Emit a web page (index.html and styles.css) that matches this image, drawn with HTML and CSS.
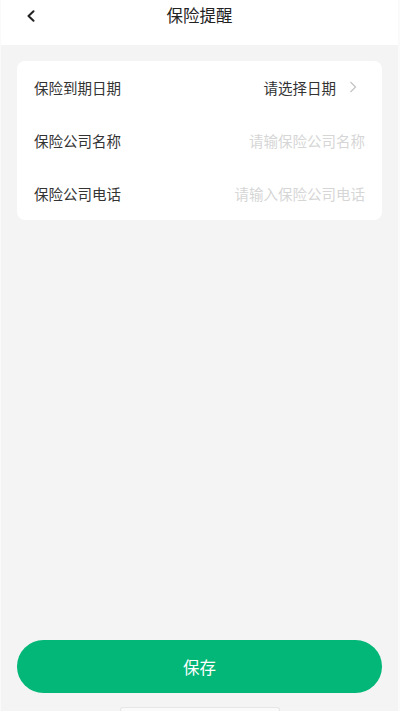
FILE: index.html
```html
<!DOCTYPE html>
<html lang="zh-CN">
<head>
<meta charset="utf-8">
<link rel="stylesheet" href="styles.css">
</head>
<body>
<div class="page">
  <header class="nav">
    <span class="back">
      <svg width="10" height="12" viewBox="0 0 10 12"><path d="M7.5 1.2 L2.5 6 L7.5 10.8" fill="none" stroke="#222" stroke-width="2" stroke-linecap="round" stroke-linejoin="round"/></svg>
    </span>
    <h1 class="title">保险提醒</h1>
  </header>
  <main class="content">
    <section class="card">
      <div class="row">
        <span class="label">保险到期日期</span>
        <span class="value">请选择日期
          <svg class="arrow" width="8" height="12" viewBox="0 0 8 12"><path d="M1.5 1 L6.5 6 L1.5 11" fill="none" stroke="#c4c4c4" stroke-width="1.3"/></svg>
        </span>
      </div>
      <div class="row">
        <span class="label">保险公司名称</span>
        <span class="placeholder">请输保险公司名称</span>
      </div>
      <div class="row">
        <span class="label">保险公司电话</span>
        <span class="placeholder">请输入保险公司电话</span>
      </div>
    </section>
  </main>
  <footer class="footer">
    <button class="save">保存</button>
    <div class="homebar"></div>
  </footer>
</div>
</body>
</html>
```
FILE: styles.css
```css
html, body {
  margin: 0;
  padding: 0;
}
body {
  font-family: "Noto Sans CJK SC", "Noto Sans", sans-serif;
  background: #f4f4f4;
}
.page {
  height: 711px;
  display: flex;
  flex-direction: column;
  box-sizing: border-box;
  border-left: 1px solid #fafafa;
  border-right: 2px solid #fafafa;
}
.nav {
  height: 45px;
  background: #fff;
  position: relative;
  display: flex;
  justify-content: center;
  flex-shrink: 0;
}
.back {
  position: absolute;
  left: 25px;
  top: 10px;
  width: 10px;
  height: 12px;
  display: flex;
}
.title {
  margin: 0;
  font-size: 16.5px;
  font-weight: normal;
  color: #222;
  line-height: 31px;
}
.content {
  flex: 1;
  padding: 16px 16px 0 16px;
}
.card {
  background: #fff;
  border-radius: 8px;
  padding: 0 17px;
}
.row {
  height: 53px;
  display: flex;
  align-items: center;
  justify-content: space-between;
  padding-bottom: 1px;
  box-sizing: border-box;
}
.label {
  font-size: 14.5px;
  color: #333;
}
.value {
  font-size: 14.5px;
  color: #333;
  display: flex;
  align-items: center;
  gap: 13px;
  margin-right: 8px;
}
.arrow {
  display: block;
}
.placeholder {
  font-size: 14.5px;
  color: #d6d6d6;
}
.footer {
  padding: 0 16px;
  flex-shrink: 0;
  display: flex;
  flex-direction: column;
  align-items: center;
}
.save {
  width: 100%;
  height: 53px;
  border: none;
  border-radius: 27px;
  background: #02b777;
  color: #fff;
  font-family: "Noto Sans CJK SC", "Noto Sans", sans-serif;
  font-size: 16.5px;
  padding: 0;
}
.homebar {
  margin-top: 14px;
  width: 160px;
  height: 4px;
  background: #fafafa;
  border: 1px solid #e6e6e6;
  border-bottom: none;
  border-radius: 3px 3px 0 0;
  box-sizing: border-box;
}
```
